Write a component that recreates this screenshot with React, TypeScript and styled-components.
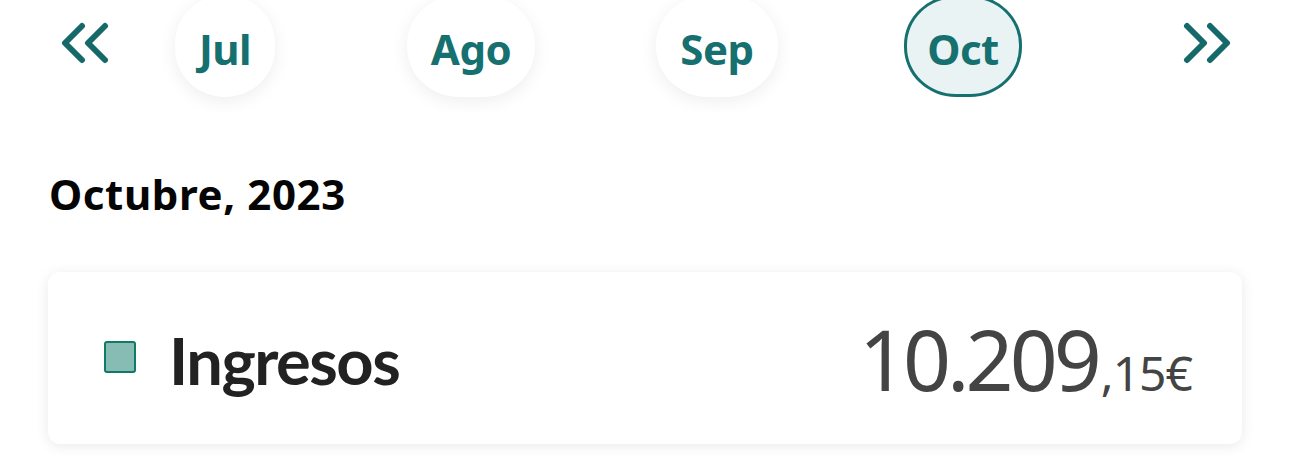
import React from "react";
import styled, { createGlobalStyle } from "styled-components";

const GlobalStyle = createGlobalStyle`
  html, body {
    margin: 0;
    padding: 0;
    background: #ffffff;
    overflow: hidden;
  }
  body {
    font-family: "Noto Sans", "Open Sans", sans-serif;
  }
`;

const Page = styled.div`
  width: 1290px;
  height: 473px;
  display: flex;
  flex-direction: column;
`;

// barra de meses
const MonthBar = styled.div`
  display: flex;
  align-items: flex-start;
  height: 113px;
`;

const NavButton = styled.button<{ $side: "left" | "right" }>`
  border: none;
  background: transparent;
  padding: 0;
  margin-top: 22px;
  width: 52px;
  height: 42px;
  margin-left: ${(p) => (p.$side === "left" ? "59px" : "44px")};
  margin-right: ${(p) => (p.$side === "left" ? "42px" : "0")};
  display: flex;
  align-items: center;
  justify-content: center;
  color: #15696b;
`;

const Viewport = styled.div`
  width: 984px;
  height: 113px;
  overflow: hidden;
`;

const Track = styled.div`
  display: flex;
  margin-left: -51px;
  margin-top: -5px;
`;

const Slot = styled.div`
  flex: 0 0 246px;
  display: flex;
  justify-content: center;
`;

const MonthPill = styled.div<{ $active?: boolean }>`
  box-sizing: border-box;
  height: 102px;
  padding: 4px ${(p) => (p.$active ? "20px" : "24px")} 0;
  display: flex;
  align-items: center;
  justify-content: center;
  border-radius: 52px / 50px;
  background: ${(p) => (p.$active ? "#eaf3f4" : "#ffffff")};
  border: ${(p) => (p.$active ? "3px solid #15706f" : "none")};
  box-shadow: ${(p) => (p.$active ? "none" : "0 4px 18px rgba(0, 0, 0, 0.07)")};
  font-size: 42px;
  font-weight: 700;
  letter-spacing: -0.5px;
  color: #15706f;
`;

const Title = styled.h2`
  margin: 53px 0 0 49px;
  font-size: 42px;
  font-weight: 700;
  letter-spacing: 0.6px;
  line-height: 56px;
  color: #050505;
`;

const Card = styled.div`
  margin: 50px 0 0 48px;
  width: 1194px;
  height: 172px;
  box-sizing: border-box;
  border-radius: 12px;
  background: #ffffff;
  box-shadow: 0 2px 14px rgba(0, 0, 0, 0.09);
  display: flex;
  align-items: center;
  padding: 0 50px 0 56px;
`;

const Swatch = styled.span`
  width: 32px;
  height: 32px;
  box-sizing: border-box;
  border: 2px solid #0f7a66;
  border-radius: 3px;
  background: #86bcb3;
  flex-shrink: 0;
  margin-right: 33px;
  margin-top: -3px;
`;

const Label = styled.span`
  font-family: Lato, "Noto Sans", sans-serif;
  font-size: 65px;
  font-weight: 700;
  letter-spacing: -1.5px;
  color: #222222;
  flex: 1;
  margin-top: 4px;
`;

const Amount = styled.span`
  font-size: 84px;
  font-weight: 400;
  color: #444444;
  letter-spacing: -4px;
`;

const Cents = styled.span`
  font-size: 48px;
  letter-spacing: -1px;
  margin-left: 3px;
`;

const DoubleChevron = ({ dir }: { dir: "left" | "right" }) => (
  <svg width="50" height="42" viewBox="0 0 50 42" fill="none">
    <g
      stroke="currentColor"
      strokeWidth="6"
      strokeLinecap="round"
      strokeLinejoin="round"
      transform={dir === "right" ? "translate(50 0) scale(-1 1)" : undefined}
    >
      <path d="M22 4 L5 21 L22 38" />
      <path d="M45 4 L28 21 L45 38" />
    </g>
  </svg>
);

const months = ["Jul", "Ago", "Sep", "Oct"];

export default function App() {
  return (
    <Page>
      <GlobalStyle />
      <MonthBar>
        <NavButton $side="left">
          <DoubleChevron dir="left" />
        </NavButton>
        <Viewport>
          <Track>
            {months.map((m) => (
              <Slot key={m}>
                <MonthPill $active={m === "Oct"}>{m}</MonthPill>
              </Slot>
            ))}
          </Track>
        </Viewport>
        <NavButton $side="right">
          <DoubleChevron dir="right" />
        </NavButton>
      </MonthBar>
      <Title>Octubre, 2023</Title>
      <Card>
        <Swatch />
        <Label>Ingresos</Label>
        <Amount>
          10.209<Cents>,15€</Cents>
        </Amount>
      </Card>
    </Page>
  );
}
